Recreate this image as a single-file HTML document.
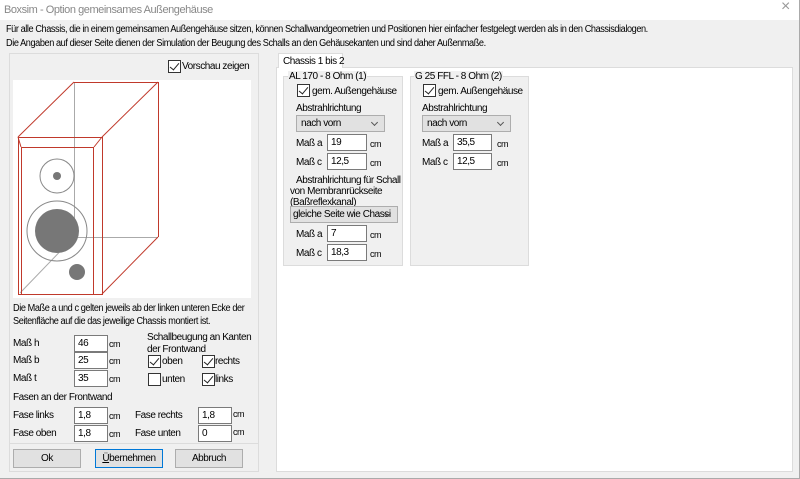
<!DOCTYPE html><html><head><meta charset="utf-8"><style>
*{box-sizing:border-box}body{margin:0;width:800px;height:479px;background:#f0f0f0;font-family:"Liberation Sans",sans-serif;font-size:10px;letter-spacing:-0.45px;color:#000;position:relative;overflow:hidden}
.a{position:absolute;white-space:nowrap;line-height:12px}
.s{transform:scaleX(0.915);transform-origin:0 0}
.in{position:absolute;background:#fff;border:1px solid #7a7a7a;height:17px;padding:2px 3px;line-height:12px}
.cb{position:absolute;width:13px;height:13px;border:1px solid #333;background:#fff}
.cb.c::after{content:"";position:absolute;left:3px;top:0px;width:4px;height:8px;border:solid #222;border-width:0 1.5px 1.5px 0;transform:rotate(40deg)}
.combo{position:absolute;background:#e1e1e1;border:1px solid #adadad;height:17px;padding:2px 4px;line-height:12px;white-space:nowrap;overflow:hidden}
.combo::after{content:"";position:absolute;right:7px;top:4px;width:4px;height:4px;border:solid #555;border-width:0 1px 1px 0;transform:rotate(45deg)}
.btn{position:absolute;background:#e1e1e1;border:1px solid #adadad;height:19px;text-align:center;line-height:17px}
.grp{position:absolute;border:1px solid #dcdcdc}
</style></head><body>
<div style="position:absolute;left:0;top:0;width:800px;height:20px;background:#fff"></div>
<div class="a" style="left:4px;top:4px;color:#888;font-size:11px">Boxsim - Option gemeinsames Außengehäuse</div>
<div class="a" style="left:781px;top:1px;color:#999;font-size:16px">×</div>
<div style="position:absolute;right:0;top:0;width:1px;height:479px;background:#aaa"></div>
<div style="position:absolute;left:0;bottom:0;width:800px;height:1px;background:#aaa"></div>
<div class="a s" style="left:6px;top:24px">Für alle Chassis, die in einem gemeinsamen Außengehäuse sitzen, können Schallwandgeometrien und Positionen hier einfacher festgelegt werden als in den Chassisdialogen.</div>
<div class="a s" style="left:6px;top:38px">Die Angaben auf dieser Seite dienen der Simulation der  Beugung des Schalls an den Gehäusekanten und sind daher Außenmaße.</div>

<div class="grp" style="left:9px;top:53px;width:250px;height:391px"></div>
<div class="cb c" style="left:168px;top:60px"></div><div class="a" style="left:182px;top:61px">Vorschau zeigen</div>
<svg style="position:absolute;left:13px;top:80px" width="238" height="218" viewBox="13 80 238 218">
<rect x="13" y="80" width="238" height="218" fill="#fff"/>
<g stroke="#aaa" stroke-width="1" fill="none"><line x1="74.5" y1="82" x2="74.5" y2="237"/><line x1="74" y1="237.5" x2="158" y2="237.5"/><line x1="20" y1="293" x2="74" y2="237"/></g>
<g stroke="#c0392b" stroke-width="1" fill="none"><rect x="18.5" y="137.5" width="84" height="157"/><rect x="21.5" y="147.5" width="72" height="147"/><line x1="18" y1="137" x2="74" y2="82"/><line x1="74" y1="82.5" x2="158" y2="82.5"/><line x1="102" y1="137" x2="158" y2="82"/><line x1="158.5" y1="82" x2="158.5" y2="237"/><line x1="102" y1="294" x2="158" y2="237"/><line x1="18" y1="137" x2="21" y2="147"/><line x1="102" y1="137" x2="94" y2="147"/></g>
<g stroke="#888" fill="none"><circle cx="57" cy="176" r="17"/><circle cx="57" cy="231" r="30"/></g>
<g fill="#777"><circle cx="57" cy="176" r="4"/><circle cx="57" cy="231" r="22"/><circle cx="77" cy="272" r="8"/></g>
</svg>
<div class="a s" style="left:13px;top:303px">Die Maße a und c gelten jeweils ab der linken unteren Ecke der</div>
<div class="a s" style="left:13px;top:316px">Seitenfläche auf die das jeweilige Chassis montiert ist.</div>
<div class="a" style="left:13px;top:338px">Maß h</div><div class="in" style="left:74px;top:335px;width:34px">46</div><div class="a" style="left:109px;top:338px;font-size:9px">cm</div>
<div class="a" style="left:13px;top:355px">Maß b</div><div class="in" style="left:74px;top:352px;width:34px">25</div><div class="a" style="left:109px;top:355px;font-size:9px">cm</div>
<div class="a" style="left:13px;top:373px">Maß t</div><div class="in" style="left:74px;top:370px;width:34px">35</div><div class="a" style="left:109px;top:373px;font-size:9px">cm</div>
<div class="a" style="left:147px;top:332px">Schallbeugung an Kanten</div><div class="a" style="left:147px;top:344px">der Frontwand</div>
<div class="cb c" style="left:148px;top:355px"></div><div class="a" style="left:162px;top:356px">oben</div>
<div class="cb c" style="left:202px;top:355px"></div><div class="a" style="left:215px;top:356px">rechts</div>
<div class="cb" style="left:148px;top:373px"></div><div class="a" style="left:162px;top:374px">unten</div>
<div class="cb c" style="left:202px;top:373px"></div><div class="a" style="left:215px;top:374px">links</div>
<div class="a" style="left:13px;top:392px">Fasen an der Frontwand</div>
<div class="a" style="left:13px;top:410px">Fase links</div><div class="in" style="left:74px;top:407px;width:34px">1,8</div><div class="a" style="left:109px;top:410px;font-size:9px">cm</div>
<div class="a" style="left:13px;top:428px">Fase oben</div><div class="in" style="left:74px;top:425px;width:34px">1,8</div><div class="a" style="left:109px;top:428px;font-size:9px">cm</div>
<div class="a" style="left:135px;top:410px">Fase rechts</div><div class="in" style="left:198px;top:407px;width:34px">1,8</div><div class="a" style="left:233px;top:408px;font-size:9px">cm</div>
<div class="a" style="left:135px;top:428px">Fase unten</div><div class="in" style="left:198px;top:425px;width:34px">0</div><div class="a" style="left:233px;top:426px;font-size:9px">cm</div>
<div style="position:absolute;left:9px;top:444px;width:250px;height:28px;border:1px solid #dcdcdc;border-top:none"></div>
<div class="btn" style="left:13px;top:449px;width:68px">Ok</div>
<div class="btn" style="left:95px;top:449px;width:68px;border-color:#0078d7"><u>Ü</u>bernehmen</div>
<div class="btn" style="left:175px;top:449px;width:68px">Abbruch</div>

<div style="position:absolute;left:276px;top:67px;width:517px;height:405px;background:#fff;border:1px solid #dcdcdc"></div>
<div style="position:absolute;left:278px;top:53px;width:65px;height:15px;background:#fff;border:1px solid #dcdcdc;border-bottom:none"></div>
<div class="a" style="left:283px;top:56px">Chassis 1 bis 2</div>
<div class="grp" style="left:283px;top:76px;width:120px;height:190px;background:#f0f0f0"></div>
<div class="a" style="left:288px;top:71px;background:#f0f0f0;padding:0 1px">AL 170 - 8 Ohm (1)</div>
<div class="cb c" style="left:297px;top:84px"></div><div class="a" style="left:312px;top:86px">gem. Außengehäuse</div>
<div class="a" style="left:296px;top:103px">Abstrahlrichtung</div>
<div class="combo" style="left:296px;top:115px;width:89px">nach vorn</div>
<div class="a" style="left:296px;top:138px">Maß a</div><div class="in" style="left:327px;top:134px;width:40px">19</div><div class="a" style="left:370px;top:138px;font-size:9px">cm</div>
<div class="a" style="left:296px;top:157px">Maß c</div><div class="in" style="left:327px;top:153px;width:40px">12,5</div><div class="a" style="left:370px;top:157px;font-size:9px">cm</div>
<div class="a" style="left:296px;top:175px">Abstrahlrichtung für Schall</div>
<div class="a" style="left:290px;top:186px">von Membranrückseite</div>
<div class="a" style="left:290px;top:197px">(Baßreflexkanal)</div>
<div class="combo" style="left:290px;top:206px;width:108px;padding-left:2px">gleiche Seite wie Chassi</div>
<div class="a" style="left:296px;top:229px">Maß a</div><div class="in" style="left:327px;top:225px;width:40px">7</div><div class="a" style="left:370px;top:229px;font-size:9px">cm</div>
<div class="a" style="left:296px;top:248px">Maß c</div><div class="in" style="left:327px;top:244px;width:40px">18,3</div><div class="a" style="left:370px;top:248px;font-size:9px">cm</div>

<div class="grp" style="left:410px;top:76px;width:119px;height:190px;background:#f0f0f0"></div>
<div class="a" style="left:414px;top:71px;background:#f0f0f0;padding:0 1px">G 25 FFL - 8 Ohm (2)</div>
<div class="cb c" style="left:423px;top:84px"></div><div class="a" style="left:438px;top:86px">gem. Außengehäuse</div>
<div class="a" style="left:422px;top:103px">Abstrahlrichtung</div>
<div class="combo" style="left:422px;top:115px;width:89px">nach vorn</div>
<div class="a" style="left:422px;top:138px">Maß a</div><div class="in" style="left:453px;top:134px;width:39px">35,5</div><div class="a" style="left:497px;top:138px;font-size:9px">cm</div>
<div class="a" style="left:422px;top:157px">Maß c</div><div class="in" style="left:453px;top:153px;width:39px">12,5</div><div class="a" style="left:497px;top:157px;font-size:9px">cm</div>
</body></html>
